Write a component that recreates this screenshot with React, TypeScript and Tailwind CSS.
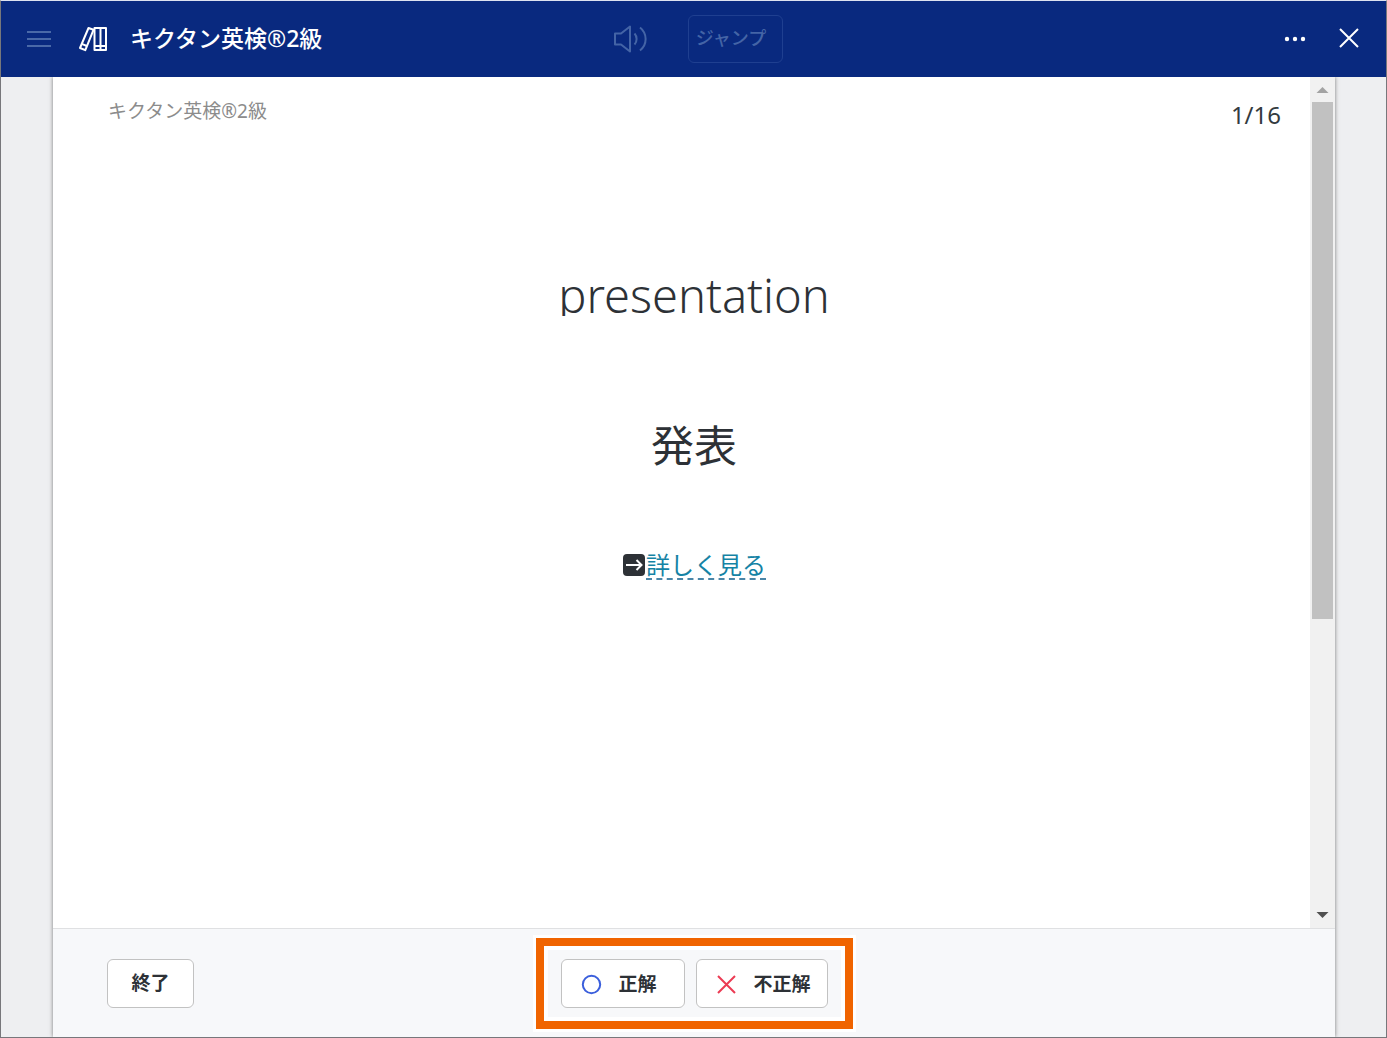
import React from 'react';

function BooksIcon() {
  return (
    <svg width="30" height="26" viewBox="0 0 30 26" fill="none" stroke="currentColor" strokeWidth="2" strokeLinejoin="round">
      <path d="M16.5 2H28V24H16.5Z" />
      <path d="M22.5 2V24M16.5 20H28" />
      <path d="M10.5 2L15.5 3.8L7.3 24.2L2 22Z" />
      <path d="M3.8 17.8L8.8 20" />
    </svg>
  );
}

function SpeakerIcon() {
  return (
    <svg width="36" height="28" viewBox="0 0 36 28" fill="none" stroke="currentColor" strokeWidth="2" strokeLinejoin="round">
      <path d="M2 8.5H8L17 1.5V26.5L8 19.5H2Z" />
      <path d="M21.5 8.5C24.3 11.5 24.3 16.5 21.5 19.5M27 2.5C34.5 8.5 34.5 19.5 27 25.5" />
    </svg>
  );
}

function Header() {
  return (
    <header className="flex h-19 shrink-0 items-center bg-[#09297f] text-white">
      <div className="flex flex-1 items-center">
        <button type="button" aria-label="Menu" disabled className="ml-6 text-[#4a69a8]">
          <svg className="block" width="28" height="24" viewBox="0 0 28 24" stroke="currentColor" strokeWidth="2">
            <path d="M2 5H26M2 12H26M2 19H26" />
          </svg>
        </button>
        <div className="ml-[25px] flex items-center gap-[22px]">
          <BooksIcon />
          <h1 className="pb-0.5 text-[23px] leading-8 font-medium">キクタン英検®2級</h1>
        </div>
      </div>
      <div className="flex items-center gap-[39px] pl-2">
        <button type="button" aria-label="Sound" disabled className="text-[#4464a6]">
          <SpeakerIcon />
        </button>
        <button
          type="button"
          disabled
          className="h-12 w-[95px] rounded-md border border-[#1f3f90] pr-2 pb-0.5 text-[18px] font-medium text-[#4464a6]"
        >
          ジャンプ
        </button>
      </div>
      <div className="flex flex-1 items-center justify-end gap-[30px]">
        <button type="button" aria-label="More">
          <svg className="block" width="24" height="24" viewBox="0 0 24 24" fill="currentColor">
            <circle cx="4" cy="12" r="2.2" />
            <circle cx="12" cy="12" r="2.2" />
            <circle cx="20" cy="12" r="2.2" />
          </svg>
        </button>
        <button type="button" aria-label="Close" className="mr-[25px]">
          <svg className="block" width="24" height="24" viewBox="0 0 24 24" stroke="currentColor" strokeWidth="2">
            <path d="M3 2L21 20M21 2L3 20" />
          </svg>
        </button>
      </div>
    </header>
  );
}

function Scrollbar() {
  return (
    <div className="flex w-[25px] shrink-0 flex-col items-center bg-[#f1f1f1]">
      <svg className="shrink-0" width="25" height="25" viewBox="0 0 25 25" fill="#a3a3a3">
        <path d="M6.5 16L12.5 10L18.5 16Z" />
      </svg>
      <div className="flex min-h-0 w-full flex-1 flex-col px-0.5">
        <div className="h-31/48 bg-[#c1c1c1]" />
      </div>
      <svg className="shrink-0" width="25" height="25" viewBox="0 0 25 25" fill="#505050">
        <path d="M6.5 9L12.5 15L18.5 9Z" />
      </svg>
    </div>
  );
}

function Flashcard() {
  return (
    <div className="flex min-w-0 flex-1 flex-col">
      <div className="flex items-start justify-between pt-4 pr-[29px] pl-[55px]">
        <p className="pt-0.5 text-[19px] leading-8 text-[#8c8c8c]">キクタン英検®2級</p>
        <p className="pt-1 text-[24px] leading-9 text-[#333b40]">1/16</p>
      </div>
      <div className="mt-[130px] flex flex-col items-center pl-[25px] text-[#2d3136]">
        {/* the line box is shorter than the descenders */}
        <p className="h-[53px] overflow-hidden text-[47px] leading-[64px] font-light">presentation</p>
        <p className="mt-[94px] text-[43px] leading-[72px]">発表</p>
        <p className="mt-[68px] flex items-center">
          <svg width="24" height="24" viewBox="0 0 24 24" fill="none">
            <rect x="1" y="1" width="22" height="22" rx="4" fill="#2d3136" />
            <path d="M4 12H19M14.5 7L19.5 12L14.5 17" stroke="white" strokeWidth="2" />
          </svg>
          <a
            href="#detail"
            className="border-b-2 border-dashed border-[#4a86a8] pt-0.5 text-[24px] leading-[26px] text-[#1583a5]"
          >
            詳しく見る
          </a>
        </p>
      </div>
    </div>
  );
}

const answerButton =
  'flex h-[49px] items-center rounded-md border border-[#c2c2c2] bg-white text-[19px] font-bold text-[#2d3136]';

function Footer() {
  return (
    <footer className="flex h-[109px] shrink-0 items-center border-t border-[#dfe0e2] bg-[#f7f8fa]">
      <div className="flex-1">
        <button
          type="button"
          className="ml-[54px] h-[49px] w-[87px] rounded-md border border-[#c2c2c2] bg-white text-[19px] font-bold text-[#2d3136]"
        >
          終了
        </button>
      </div>
      <div className="border-8 border-[#f06400] px-[17px] py-[13px] shadow-[0_0_0_3px_white,inset_0_0_0_4px_white]">
        <div className="flex gap-[11px]">
          <button type="button" className={`${answerButton} w-[124px] gap-[17px] pt-0.5 pl-[19px]`}>
            <svg width="21" height="21" viewBox="0 0 21 21" fill="none" stroke="#3b5fdc" strokeWidth="2">
              <circle cx="10.5" cy="10.5" r="8.7" />
            </svg>
            正解
          </button>
          <button type="button" className={`${answerButton} w-[132px] gap-[17px] pt-0.5 pl-[19px]`}>
            <svg width="21" height="21" viewBox="0 0 21 21" stroke="#ec3b53" strokeWidth="2">
              <path d="M2 2L19 19M19 2L2 19" />
            </svg>
            不正解
          </button>
        </div>
      </div>
      <div className="flex-1" />
    </footer>
  );
}

export default function App() {
  return (
    <div className="flex h-screen flex-col border border-[#77777b] border-t-[#dde2f0] bg-[#eeeff1] font-['Noto_Sans','Noto_Sans_CJK_JP',sans-serif]">
      <Header />
      <main className="flex min-h-0 flex-1 overflow-hidden px-[52px] pr-[51px]">
        <section className="flex min-w-0 flex-1 flex-col bg-white shadow-[0_0_4px_rgba(0,0,0,0.5)]">
          <div className="flex min-h-0 flex-1">
            <Flashcard />
            <Scrollbar />
          </div>
          <Footer />
        </section>
      </main>
    </div>
  );
}
